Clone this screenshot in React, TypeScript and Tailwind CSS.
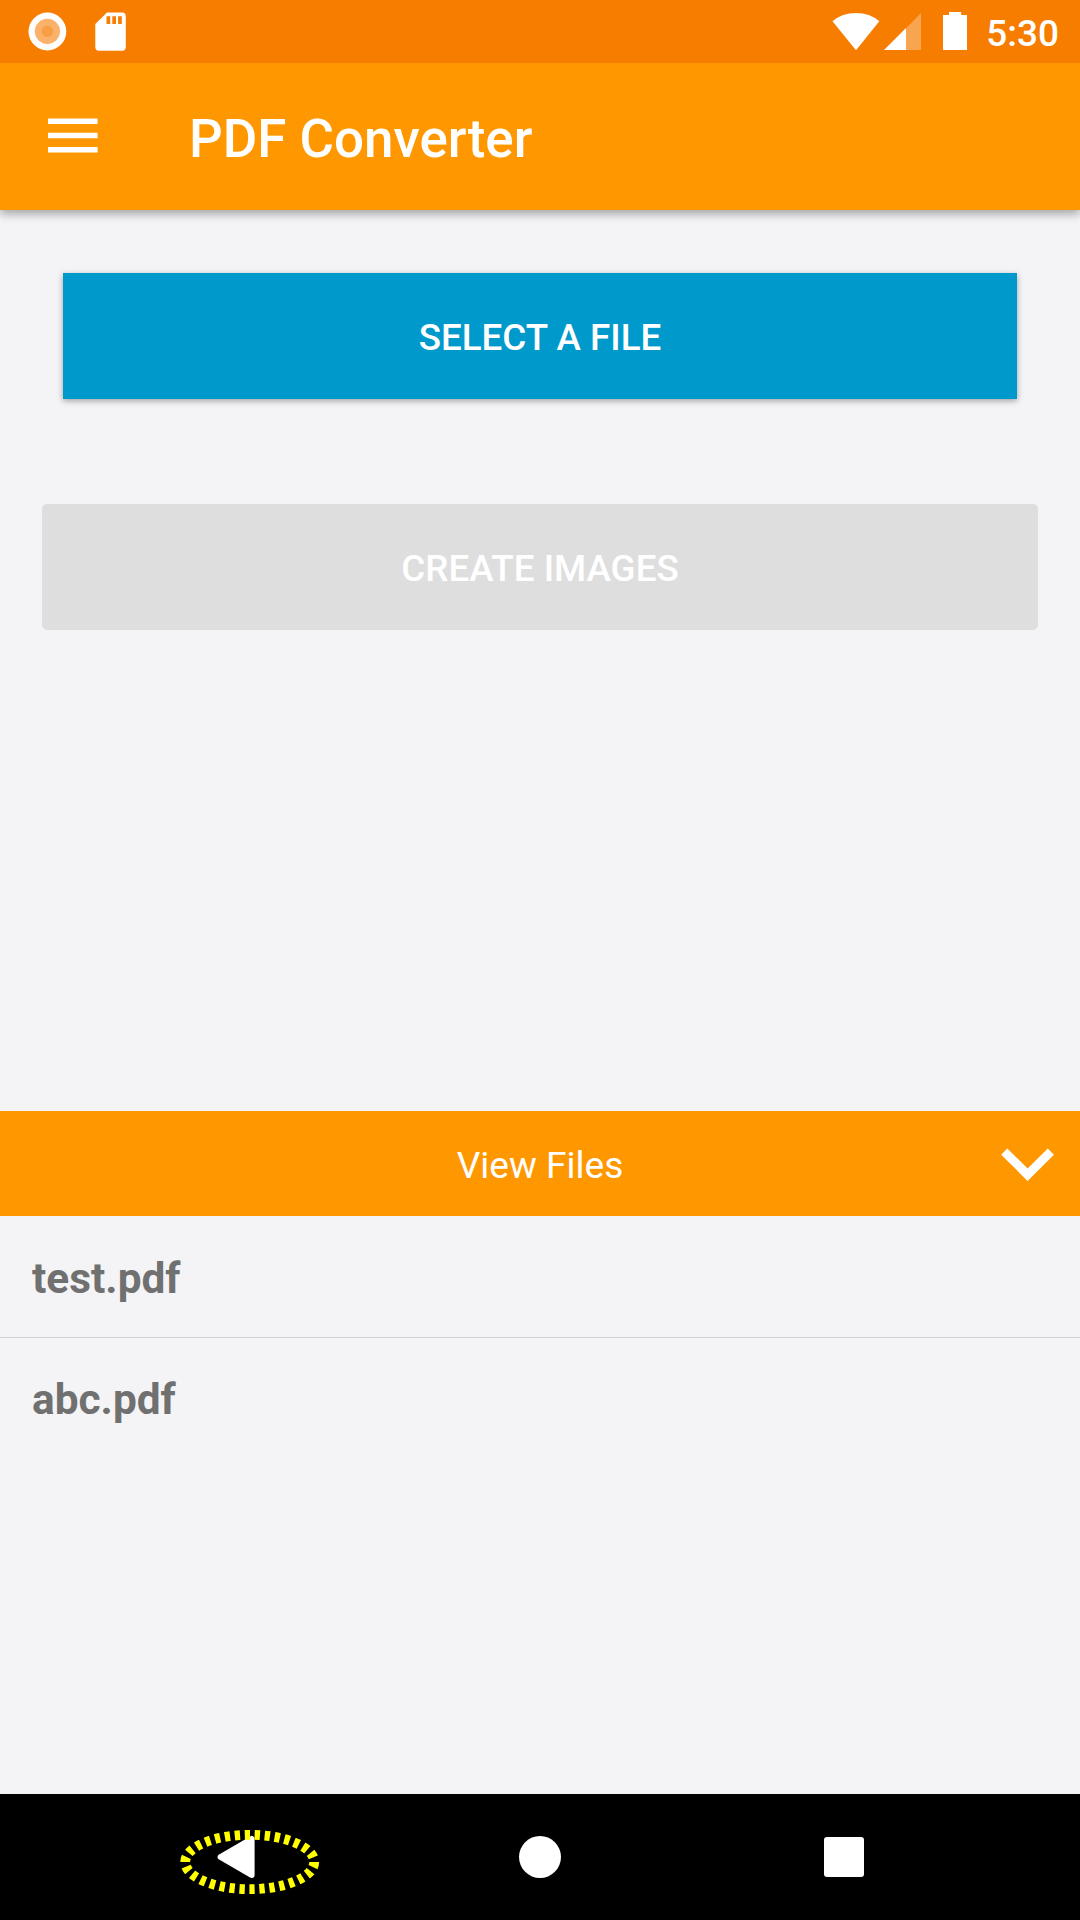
import React from "react";

function StatusBar() {
  return (
    <div className="relative z-10 flex h-[63px] shrink-0 items-start justify-between bg-[#f77d00] pl-[28px] pr-[21px] pt-[12px]">
      <div className="flex">
        <svg width="39" height="39" viewBox="28 12 39 39">
          <circle cx="47.4" cy="31.5" r="18.9" fill="#fff" />
          <circle cx="47.4" cy="31.3" r="12.6" fill="#fab26b" />
          <circle cx="47.4" cy="31.3" r="5.8" fill="#f89f46" />
        </svg>
        <svg className="ml-[28px]" width="31" height="39" viewBox="95 12 31 39">
          <path
            fill="#fff"
            fillRule="evenodd"
            d="M107 12.5h15.2q3.6 0 3.6 3.6v31q0 3.6-3.6 3.6H98.9q-3.6 0-3.6-3.6V24zM106.5 16.2v7.8h3.7v-7.8zM112.3 16.2v7.8h3.7v-7.8zM118.1 16.2v7.8h3.7v-7.8z"
          />
        </svg>
      </div>
      <div className="flex">
        <svg width="136" height="39" viewBox="832 12 136 39">
          <path fill="#fff" d="M856 50.2 832.5 21.3Q842 13 856 13t23.3 8.3z" />
          <path fill="#f9a54f" d="M906 28.2 921 13v37h-15z" />
          <path fill="#fff" d="M884 50 906 28v22z" />
          <path fill="#fff" d="M949 12h12.2v3h5.8v35h-24V15h6z" />
        </svg>
        <div className="ml-[18.5px] text-[36.9px] font-medium leading-[43px]">5:30</div>
      </div>
    </div>
  );
}

function NavBar() {
  return (
    <nav className="flex h-[126px] shrink-0 items-start bg-black pl-[178px] pt-[32px]">
      <svg width="144" height="72" viewBox="178 1826 144 72">
        <path
          fill="#fff"
          stroke="#fff"
          strokeWidth="6"
          strokeLinejoin="round"
          d="M220.6 1857 251.6 1839v36z"
        />
        <ellipse
          cx="249.7"
          cy="1862"
          rx="64.5"
          ry="27.2"
          fill="none"
          stroke="#ff0"
          strokeWidth="9.8"
          pathLength="300"
          strokeDasharray="5.3 4.7"
        />
      </svg>
      <div className="ml-[197px] mt-[10px] size-[42px] rounded-full bg-white" />
      <div className="ml-[263px] mt-[11px] size-[40px] rounded-[3px] bg-white" />
    </nav>
  );
}

export default function App() {
  return (
    <div className="flex h-[1920px] w-[1080px] flex-col overflow-hidden bg-[#f4f4f6] font-['Roboto',sans-serif] text-white">
      <StatusBar />
      <header className="relative flex h-[147px] shrink-0 items-center bg-[#ff9800] pl-[48px] shadow-[0_4px_9px_rgba(0,0,0,0.33)]">
        <svg className="mt-[-1px]" width="50" height="36" viewBox="0 0 50 36">
          <path fill="#fff" d="M0 .6h49.6V6H0zM0 14.8h49.6v5.4H0zM0 29h49.6v5.4H0z" />
        </svg>
        <h1 className="ml-[91px] pt-[6px] text-[52.9px] font-medium">PDF Converter</h1>
      </header>
      <main className="flex h-[901px] shrink-0 flex-col">
        <button className="mx-[63px] mt-[63px] h-[126px] bg-[#0099cc] pt-[3px] text-[36.75px] font-medium shadow-[0_2px_6px_rgba(0,0,0,0.34)]">
          SELECT A FILE
        </button>
        <button className="mx-[42px] mt-[105px] h-[126px] rounded-[5px] bg-[#dedede] pt-[3px] text-[36.75px] font-medium">
          CREATE IMAGES
        </button>
      </main>
      <div className="grid h-[105px] shrink-0 grid-cols-[1fr_auto_1fr] items-center bg-[#ff9800]">
        <span className="col-start-2 pt-[4px] text-[37.1px]">View Files</span>
        <svg className="mr-[26px] mt-[2px] justify-self-end" width="53" height="33" viewBox="1001 1148 53 33">
          <path
            fill="#fff"
            d="M1001.2 1154.7 1007.3 1148.6 1027.6 1168.4 1047.8 1148.6 1053.9 1154.7 1027.6 1180.9z"
          />
        </svg>
      </div>
      <ul className="flex-1 text-[42.4px] font-bold text-[#707070]">
        <li className="flex h-[122px] items-center border-b border-[#d0d0d2] pl-[32px] pt-[5px]">test.pdf</li>
        <li className="flex h-[122px] items-center pl-[32px] pt-px">abc.pdf</li>
      </ul>
      <NavBar />
    </div>
  );
}
